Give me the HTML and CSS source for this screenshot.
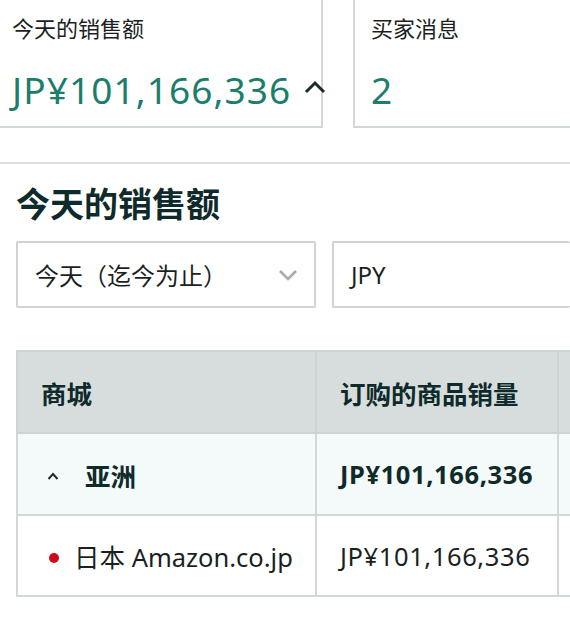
FILE: index.html
```html
<!DOCTYPE html>
<html lang="zh">
<head>
<meta charset="utf-8">
<link rel="stylesheet" href="styles.css">
</head>
<body>
<div class="page">
  <div class="cards">
    <div class="card card-sales">
      <div class="card-label">今天的销售额</div>
      <div class="card-value"><span class="num">JP¥101,166,336</span>
        <svg class="caret-up" width="22" height="14" viewBox="0 0 22 14"><path d="M2 12 L11 3 L20 12" fill="none" stroke="#1d2b2b" stroke-width="3"/></svg>
      </div>
    </div>
    <div class="card card-msg">
      <div class="card-label">买家消息</div>
      <div class="card-value"><span class="num">2</span></div>
    </div>
  </div>
  <div class="divider"></div>
  <div class="section">
    <h2 class="title">今天的销售额</h2>
    <div class="filters">
      <div class="select select-range">
        <span>今天（迄今为止）</span>
        <svg class="chev" width="20" height="12" viewBox="0 0 20 12"><path d="M2 2 L10 10 L18 2" fill="none" stroke="#a6adad" stroke-width="2.6"/></svg>
      </div>
      <div class="select select-cur"><span>JPY</span></div>
    </div>
    <table class="grid">
      <colgroup><col class="k1"><col class="k2"><col class="k3"></colgroup>
      <thead>
        <tr><th>商城</th><th>订购的商品销量</th><th></th></tr>
      </thead>
      <tbody>
        <tr class="group">
          <td><svg class="tog" width="12" height="8" viewBox="0 0 12 8"><path d="M1.5 7 L6 2 L10.5 7" fill="none" stroke="#1d2b2b" stroke-width="2"/></svg><b>亚洲</b></td>
          <td><b class="amt">JP¥101,166,336</b></td>
          <td></td>
        </tr>
        <tr class="item">
          <td><span class="dot"></span>日本 Amazon.co.jp</td>
          <td><span class="amt">JP¥101,166,336</span></td>
          <td></td>
        </tr>
      </tbody>
    </table>
  </div>
</div>
</body>
</html>
```
FILE: styles.css
```css
html, body {
  margin: 0;
  padding: 0;
  background: #ffffff;
}
body {
  width: 570px;
  height: 620px;
  overflow: hidden;
  font-family: "Noto Sans", "Noto Sans CJK SC", sans-serif;
  color: #0f1111;
}
.page {
  width: 570px;
  overflow: hidden;
}
.cards {
  display: flex;
  gap: 30px;
  height: 128px;
}
.card {
  box-sizing: border-box;
  background: #fff;
  border-bottom: 2px solid #d3d6d6;
  padding: 12px 0 0 12px;
}
.card-sales {
  width: 323px;
  border-right: 2px solid #d3d6d6;
  flex: none;
}
.card-msg {
  flex: 1;
  border-left: 2px solid #d3d6d6;
  padding-left: 16px;
}
.card-label {
  font-size: 22px;
  line-height: 32px;
  color: #1b1f1f;
}
.card-value {
  margin-top: 26px;
  font-size: 37px;
  line-height: 40px;
  color: #1b7d6c;
  display: flex;
  align-items: center;
  white-space: nowrap;
}
.num {
  letter-spacing: 1.1px;
  flex: none;
}
.caret-up {
  flex: none;
  margin-left: 13px;
  margin-top: -6px;
}
.divider {
  margin-top: 34px;
  height: 2px;
  background: #dcdfdf;
}
.section {
  padding-left: 16px;
}
.title {
  margin: 18px 0 0 0;
  font-size: 34px;
  line-height: 44px;
  font-weight: 700;
  color: #0f2a2a;
}
.filters {
  display: flex;
  gap: 16px;
  margin-top: 15px;
}
.select {
  box-sizing: border-box;
  height: 67px;
  border: 2px solid #cfd3d3;
  border-radius: 2px;
  display: flex;
  align-items: center;
  font-size: 24px;
  color: #1b1f1f;
  padding-left: 17px;
}
.select-range {
  width: 300px;
  justify-content: space-between;
  padding-right: 16px;
}
.select-cur {
  flex: 1;
  border-right: none;
}
.grid {
  margin-top: 42px;
  border-collapse: collapse;
  width: 581px;
  table-layout: fixed;
}
.k1 { width: 299px; }
.k2 { width: 242px; }
.k3 { width: 40px; }
.grid th, .grid td {
  border: 2px solid #d3d8d8;
  text-align: left;
  padding: 0 0 0 23px;
  font-size: 25.5px;
  white-space: nowrap;
}
.grid th {
  background: #d7dddd;
  height: 80px;
  font-weight: 700;
  color: #0f2a2a;
  border-color: #cdd4d4;
}
.amt {
  letter-spacing: 0.6px;
}
.group td {
  background: #f4f9f9;
  height: 80px;
}
.group b {
  font-weight: 700;
  color: #0f2a2a;
}
.tog {
  margin: 0 26px 0 6px;
  vertical-align: middle;
  position: relative;
  top: -3px;
}
.item td {
  height: 79px;
  color: #1b1f1f;
}
.dot {
  display: inline-block;
  width: 10px;
  height: 10px;
  border-radius: 50%;
  background: #cc0c1a;
  margin: 0 15px 0 8px;
  vertical-align: middle;
  position: relative;
  top: -2px;
}
```
